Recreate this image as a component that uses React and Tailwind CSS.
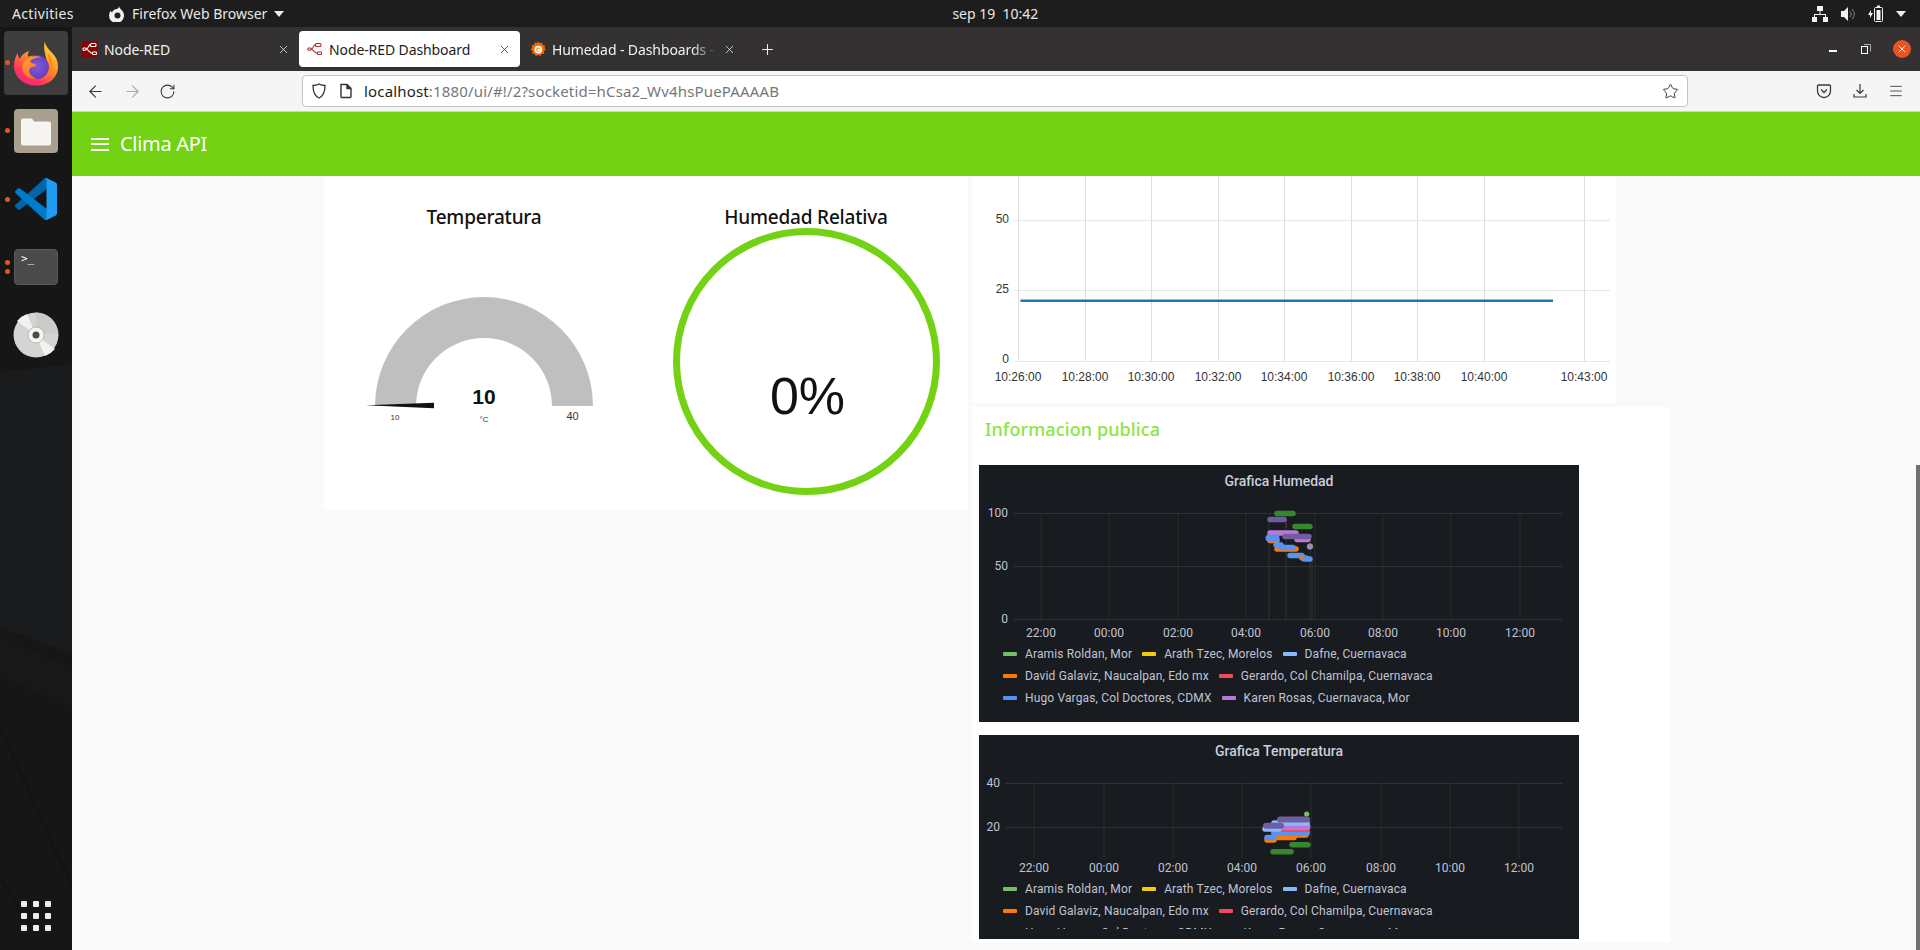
import React from "react";
import { ArrowLeft, ArrowRight, RotateCw, Star, X, Plus, Menu } from "lucide-react";

const ubuntu = "font-['Noto_Sans','Open_Sans',sans-serif]";

function NodeRedMark({ color = "#fff" }) {
  return (
    <svg viewBox="0 0 16 16" className="h-full w-full" fill="none" stroke={color} strokeWidth="1.1">
      <rect x="8.5" y="2.5" width="5.5" height="3" rx="1" />
      <rect x="1" y="7" width="3" height="2.2" rx="0.6" />
      <rect x="10.5" y="11" width="4" height="2.5" rx="0.8" />
      <path d="M4 8c3 0 2-4.500 4.500-4.500M4 8.300c3 0 3 3.900 6.500 3.900" />
    </svg>
  );
}

function GrafanaMark() {
  return (
    <svg viewBox="0 0 16 16" className="h-4 w-4">
      <path d="M8 0.500l1.700 1.800 2.300-.6.800 2.200 2.300.8-.6 2.300L15.800 8.700 14 10.300l.1 2.400-2.400.4-1.300 2-2.200-1-2.300.9-1.200-2.100-2.400-.4.200-2.400L.7 8.500l1.500-1.800-.4-2.400 2.300-.6.900-2.200 2.300.6z" fill="#f46800" />
      <circle cx="8.300" cy="8.600" r="3.900" fill="#fff" />
      <circle cx="8.300" cy="8.600" r="2.300" fill="#f9a03c" />
      <circle cx="8.800" cy="8.900" r="1.200" fill="#fff" />
    </svg>
  );
}

function FirefoxLogo() {
  return (
    <svg viewBox="0 0 48 48" className="h-[47px] w-[46px]">
      <defs>
        <linearGradient id="ffa" x1="0.8" y1="0" x2="0.2" y2="1">
          <stop offset="0" stopColor="#ffd93b" />
          <stop offset="0.4" stopColor="#ff9a25" />
          <stop offset="0.75" stopColor="#ff3b58" />
          <stop offset="1" stopColor="#f01d8c" />
        </linearGradient>
        <radialGradient id="ffb" cx="0.5" cy="0.45" r="0.55">
          <stop offset="0" stopColor="#7c5cdc" />
          <stop offset="1" stopColor="#6c3bb8" />
        </radialGradient>
        <linearGradient id="ffc" x1="0" y1="0" x2="1" y2="1">
          <stop offset="0" stopColor="#ffa92e" />
          <stop offset="1" stopColor="#ff5a2c" />
        </linearGradient>
      </defs>
      <path d="M33 1c1 5 4 8 8 12 4 4 6 9 6 14 0 12-10 20-23 20C11 47 1 38 1 26c0-5 2-10 4-13 0 3 1 5 2 6 2-4 6-7 10-8-2 3-2 5-1 6 2-1 5-1 7-1 6 0 10 4 12 7 1-4-4-11-2-22z" fill="url(#ffa)" />
      <circle cx="25" cy="28" r="12.500" fill="url(#ffb)" />
      <path d="M30 18c-4-2-9-2-13 0-5 2-8 7-7 13 2 6 8 10 15 9-5-2-8-5-8-9 0-3 3-3 6-4 1-1 1-2 0-3-3 0-5-1-5-3 3-2 8-4 12-3z" fill="url(#ffc)" />
      <path d="M36 13c4 4 6 9 5 15-1 7-7 12-13 13 6-3 10-8 10-14 0-5-1-9-2-14z" fill="#ff7f1f" opacity="0.7" />
    </svg>
  );
}

function VsCode() {
  return (
    <svg viewBox="0 0 100 100" className="h-[42px] w-[42px]">
      <path fill="#0065A9" d="M96.4614 10.7962L75.8569 0.875542C73.4719 -0.272773 70.6217 0.211611 68.75 2.08333L1.29858 63.5832C-0.515693 65.2373 -0.513607 68.0937 1.30308 69.7452L6.81272 74.754C8.29793 76.1042 10.5347 76.2036 12.1338 74.9905L93.3609 13.3699C96.086 11.3026 100 13.2462 100 16.6667V16.4275C100 14.0265 98.6246 11.8378 96.4614 10.7962Z" />
      <path fill="#007ACC" d="M96.4614 89.2038L75.8569 99.1245C73.4719 100.273 70.6217 99.7884 68.75 97.9167L1.29858 36.4169C-0.515693 34.7627 -0.513607 31.9063 1.30308 30.2548L6.81272 25.246C8.29793 23.8958 10.5347 23.7964 12.1338 25.0095L93.3609 86.6301C96.086 88.6974 100 86.7538 100 83.3334V83.5726C100 85.9735 98.6246 88.1622 96.4614 89.2038Z" />
      <path fill="#1F9CF0" d="M75.8578 99.1263C73.4721 100.274 70.6219 99.7885 68.75 97.9166C71.0564 100.223 75 98.5895 75 95.3278V4.67213C75 1.41039 71.0564 -0.223106 68.75 2.08329C70.6219 0.211402 73.4721 -0.273666 75.8578 0.873633L96.4587 10.7807C98.6234 11.8217 100 14.0112 100 16.4132V83.5871C100 85.9891 98.6234 88.1786 96.4586 89.2196L75.8578 99.1263Z" />
    </svg>
  );
}

function Dvd() {
  return (
    <svg viewBox="0 0 46 46" className="h-[46px] w-[46px]">
      <circle cx="23" cy="23" r="22.500" fill="#d4d4d4" />
      <path d="M23 23L4 9a23 23 0 0 1 10-7zM23 23l19 14a23 23 0 0 1-10 7z" fill="#f2f2f2" />
      <path d="M23 23L23 .5a22.500 22.500 0 0 1 22 20z" fill="#cbcbcb" />
      <circle cx="23" cy="23" r="8" fill="#f7f5f0" stroke="#b9ab95" strokeWidth="0.8" />
      <circle cx="23" cy="23" r="3.500" fill="#4b4b4b" />
    </svg>
  );
}

function Dock() {
  return (
    <aside className="relative flex w-[72px] shrink-0 flex-col items-center overflow-hidden bg-[#161616]">
      <svg className="absolute inset-0 h-full w-full" viewBox="0 0 72 923" preserveAspectRatio="none">
        <path d="M0 345l72-8v290L0 600z" fill="#1a1b1c" />
        <path d="M0 700L72 860M0 850l30 50" stroke="#131313" strokeWidth="3" fill="none" />
        <path d="M0 610l72 30v40L0 650z" fill="#181818" />
      </svg>
      <div className="relative mt-[4px] flex h-[64px] w-[64px] items-center justify-center rounded-[4px] bg-[#3d3d3d]">
        <FirefoxLogo />
      </div>
      <div className="relative mt-[14px] flex h-[44px] w-[44px] items-center justify-center rounded-[4px] bg-[#a89f8e]">
        <svg viewBox="0 0 32 28" className="h-[29px] w-[32px]">
          <path d="M1 3a2 2 0 0 1 2-2h9l2 3h15a2 2 0 0 1 2 2v20a2 2 0 0 1-2 2H3a2 2 0 0 1-2-2z" fill="#f6f5f2" />
        </svg>
      </div>
      <div className="relative mt-[25px]"><VsCode /></div>
      <div className="relative mt-[29px] h-[36px] w-[44px] rounded-[4px] border border-[#5a5a5a] bg-[#4a4a4a] pl-[6px] pt-[1px] font-['DejaVu_Sans_Mono',monospace] text-[11px] leading-[16px] text-white">
        &gt;_
      </div>
      <div className="relative mt-[27px]"><Dvd /></div>
      <div className="relative mt-auto mb-[19px] grid grid-cols-3 gap-x-[6px] gap-y-[6px]">
        {Array.from({ length: 9 }).map((_, i) => (
          <div key={i} className="h-[6px] w-[6px] rounded-[1px] bg-[#eeeeee]" />
        ))}
      </div>
      <div className="absolute left-[5px] top-[33px] h-[5px] w-[5px] rounded-full bg-[#e95420]" />
      <div className="absolute left-[5px] top-[101px] h-[5px] w-[5px] rounded-full bg-[#e95420]" />
      <div className="absolute left-[5px] top-[170px] h-[5px] w-[5px] rounded-full bg-[#e95420]" />
      <div className="absolute left-[5px] top-[233px] h-[5px] w-[5px] rounded-full bg-[#e95420]" />
      <div className="absolute left-[5px] top-[242px] h-[5px] w-[5px] rounded-full bg-[#e95420]" />
    </aside>
  );
}

function TopBar() {
  return (
    <header className={`flex h-[27px] shrink-0 items-center bg-[#1d1d1d] text-[14px] text-[#e8e8e8] ${ubuntu}`}>
      <span className="ml-[12px] w-[97px] tracking-[0.35px]">Activities</span>
      <svg viewBox="0 0 16 16" className="h-[16px] w-[16px]">
        <path d="M10 0c0 2 2 3 3.500 5A7.500 7.500 0 1 1 2 4.500c0 1 .5 1.500 1 2C4 4 6 3 8 3c1-.5 2-1.500 2-3z" fill="#f0f0f0" />
        <circle cx="8.500" cy="9.500" r="3" fill="#1d1d1d" />
      </svg>
      <span className="ml-[7px] tracking-[0px]">Firefox Web Browser</span>
      <svg viewBox="0 0 10 6" className="ml-[7px] h-[6px] w-[10px]"><path d="M0 0h10L5 6z" fill="#eee" /></svg>
      <span className="ml-[668px] whitespace-pre">sep 19  10:42</span>
      <div className="ml-auto mr-[14px] flex items-center gap-[12px]">
        <svg viewBox="0 0 16 16" className="h-[16px] w-[16px]" fill="#f2f2f2">
          <rect x="5" y="0" width="6" height="5" />
          <rect x="0" y="11" width="5" height="5" />
          <rect x="11" y="11" width="5" height="5" />
          <path d="M7.500 5h1v3H14v3h-1V9H3v2H2V8h5.500z" />
        </svg>
        <svg viewBox="0 0 16 16" className="h-[16px] w-[16px]">
          <path d="M1 5h3l4-4v14l-4-4H1z" fill="#f2f2f2" />
          <path d="M10 5c1.500 1.500 1.500 4.500 0 6M12 3c3 2.500 3 7.500 0 10" stroke="#888" fill="none" />
        </svg>
        <svg viewBox="0 0 16 18" className="h-[18px] w-[16px]">
          <path d="M3 5L0 10h2v3l3-5H3z" fill="#f2f2f2" />
          <rect x="6.500" y="2.500" width="8" height="14" rx="1" fill="none" stroke="#f2f2f2" />
          <rect x="8.500" y="5" width="4" height="10" fill="#f2f2f2" />
          <rect x="9" y="0.500" width="3" height="2" fill="#f2f2f2" />
        </svg>
        <svg viewBox="0 0 10 6" className="h-[6px] w-[10px]"><path d="M0 0h10L5 6z" fill="#eee" /></svg>
      </div>
    </header>
  );
}

function Tab({ active, icon, title, width, fade }) {
  return (
    <div className={`flex h-[36px] shrink-0 items-center rounded-[4px] pl-[8px] pr-[9px] text-[14px] ${active ? "bg-white text-[#222]" : "text-[#f0f0f0]"} ${ubuntu}`} style={{ width }}>
      <div className="h-[16px] w-[16px] shrink-0">{icon}</div>
      <span className={`ml-[6px] flex-1 overflow-hidden whitespace-nowrap tracking-[-0.1px] ${fade ? "[mask-image:linear-gradient(to_right,black_85%,transparent)]" : ""}`}>{title}</span>
      <X size={13} strokeWidth={1.4} className="ml-[6px] shrink-0" />
    </div>
  );
}

function TabBar() {
  return (
    <div className="flex h-[44px] shrink-0 items-center bg-[#333132] pl-[2px]">
      <Tab width={225} title="Node-RED" icon={<div className="h-full w-full rounded-[1px] bg-[#8f0000]"><NodeRedMark /></div>} />
      <Tab active width={221} title="Node-RED Dashboard" icon={<NodeRedMark color="#a83232" />} />
      <div className="ml-[2px]">
        <Tab width={223} fade title="Humedad - Dashboards - Grafana" icon={<GrafanaMark />} />
      </div>
      <Plus size={17} strokeWidth={1.5} className="ml-[14px] text-[#f0f0f0]" />
      <div className="ml-auto mr-[9px] flex items-center text-white">
        <div className="h-[1.5px] w-[8px] translate-y-[2px] bg-white" />
        <svg viewBox="0 0 10 10" className="ml-[24px] h-[10px] w-[10px]" fill="none" stroke="#fff"><rect x="0.500" y="2.500" width="6" height="7" /><path d="M3 0.500h6.500v7" stroke="#aaa" /></svg>
        <div className="ml-[22px] flex h-[18px] w-[18px] items-center justify-center rounded-full bg-[#e95420]"><X size={12} strokeWidth={1.8} /></div>
      </div>
    </div>
  );
}

function Toolbar() {
  return (
    <div className="flex h-[41px] shrink-0 items-center border-b border-[#cfcfcf] bg-[#f5f5f5] text-[#3a3a3a]">
      <ArrowLeft size={19} strokeWidth={1.4} className="ml-[14px]" />
      <ArrowRight size={19} strokeWidth={1.4} className="ml-[18px] text-[#aaa]" />
      <RotateCw size={17} strokeWidth={1.5} className="ml-[17px]" />
      <div className={`ml-[126px] flex h-[32px] w-[1386px] items-center rounded-[4px] border border-[#c4c4c4] bg-white pr-[8px] text-[15px] ${ubuntu}`}>
        <svg viewBox="0 0 16 16" className="ml-[8px] h-[16px] w-[16px]" fill="none" stroke="#333" strokeWidth="1.3"><path d="M8 1c2 1.200 4 1.500 6 1.500 0 6-1.500 10.500-6 12.500C3.500 13 2 8.500 2 2.500 4 2.500 6 2.200 8 1z" /></svg>
        <svg viewBox="0 0 14 16" className="ml-[12px] h-[16px] w-[14px]" fill="none" stroke="#333" strokeWidth="1.4"><path d="M2 1.500h6l4 4v8a1 1 0 0 1-1 1H3a1 1 0 0 1-1-1z" /><path d="M8 1.500v4h4" fill="#333" /></svg>
        <span className="ml-[11px] tracking-[0.16px] text-[#1c1c1c]">localhost<span className="text-[#777]">:1880/ui/#!/2?socketid=hCsa2_Wv4hsPuePAAAAB</span></span>
        <Star size={17} strokeWidth={1.4} className="ml-auto" />
      </div>
      <svg viewBox="0 0 16 16" className="ml-[128px] h-[16px] w-[16px]" fill="none" stroke="#3a3a3a" strokeWidth="1.3"><path d="M2.500 2h11a1 1 0 0 1 1 1v5a6.500 6.500 0 0 1-13 0V3a1 1 0 0 1 1-1z" /><path d="M5 6.500l3 3 3-3" /></svg>
      <svg viewBox="0 0 16 16" className="ml-[20px] h-[16px] w-[16px]" fill="none" stroke="#3a3a3a" strokeWidth="1.2"><path d="M8 1v9M4.500 7L8 10.500 11.500 7M2 11v3h12v-3" /></svg>
      <Menu size={16} strokeWidth={1.3} className="ml-[20px]" />
    </div>
  );
}

function Gauge() {
  return (
    <svg viewBox="0 0 280 190" className="h-[190px] w-[280px]">
      <path d="M31 136a109 109 0 0 1 218 0h-41a68 68 0 0 0-136 0z" fill="#bfbfbf" />
      <path d="M22 135.300L90 132.700V138.300z" fill="#111" />
      <g fontFamily="Liberation Sans, sans-serif" textAnchor="middle" fill="#111">
        <text x="140" y="134" fontSize="21" fontWeight="700">10</text>
        <text x="140" y="152" fontSize="8" fill="#333">°C</text>
        <text x="51" y="150" fontSize="8" fill="#333">10</text>
        <text x="228.500" y="149.500" fontSize="11" fill="#333">40</text>
      </g>
    </svg>
  );
}

function LeftPanel() {
  return (
    <section className={`flex h-[334px] w-[644px] shrink-0 bg-white ${ubuntu}`}>
      <div className="flex w-[320px] flex-col items-center">
        <h3 className="mt-[28px] text-[19px] leading-[26px] font-medium tracking-[-0.2px] text-[#111]">Temperatura</h3>
        <div className="mt-[40px]"><Gauge /></div>
      </div>
      <div className="flex w-[324px] flex-col items-center">
        <h3 className="mt-[28px] text-[19px] leading-[26px] font-medium tracking-[-0.2px] text-[#111]">Humedad Relativa</h3>
        <div className="relative ml-[1px] -mt-[2px] flex h-[267px] w-[267px] items-center justify-center rounded-full border-[7px] border-[#72d213] font-['Liberation_Sans',sans-serif] text-[52px] text-[#111]">
          <span className="translate-x-[1px] translate-y-[34px]">0%</span>
        </div>
      </div>
    </section>
  );
}

function LineChart() {
  const xs = [
    [46, "10:26:00"], [113, "10:28:00"], [179, "10:30:00"], [246, "10:32:00"], [312, "10:34:00"],
    [379, "10:36:00"], [445, "10:38:00"], [512, "10:40:00"], [612, "10:43:00"],
  ];
  return (
    <section className="h-[227px] w-[644px] bg-white">
      <svg viewBox="0 0 644 227" className="h-[227px] w-[644px]">
        {xs.map(([x]) => <line key={x} x1={x + 0.5} x2={x + 0.5} y1="0" y2="185" stroke="#dedede" />)}
        {[44, 114, 185].map((y) => <line key={y} x1="42" x2="638" y1={y + 0.5} y2={y + 0.5} stroke="#e6e6e6" />)}
        <line x1="48.500" x2="581" y1="124.700" y2="124.700" stroke="#1f77b4" strokeWidth="2.500" />
        <g fontFamily="Liberation Sans, sans-serif" fontSize="12" fill="#333">
          <text x="37" y="47" textAnchor="end">50</text>
          <text x="37" y="117" textAnchor="end">25</text>
          <text x="37" y="187" textAnchor="end">0</text>
          {xs.map(([x, t]) => <text key={x} x={x} y="205" textAnchor="middle">{t}</text>)}
        </g>
      </svg>
    </section>
  );
}

const LEGEND = [
  ["#73bf69", "Aramis Roldan, Mor"],
  ["#f2cc0c", "Arath Tzec, Morelos"],
  ["#8ab8ff", "Dafne, Cuernavaca"],
  ["#ff780a", "David Galaviz, Naucalpan, Edo mx"],
  ["#f2495c", "Gerardo, Col Chamilpa, Cuernavaca"],
  ["#5794f2", "Hugo Vargas, Col Doctores, CDMX"],
  ["#b877d9", "Karen Rosas, Cuernavaca, Mor"],
];

function Legend() {
  return (
    <div className="flex w-[500px] flex-wrap pl-[24px] font-['Roboto',sans-serif] text-[12px] leading-[22px] tracking-[0.14px] text-[#c0c4d4]">
      {LEGEND.map(([c, n]) => (
        <div key={n} className="mr-[10px] flex h-[22px] items-center whitespace-nowrap">
          <div className="mr-[8px] h-[4px] w-[14px] rounded-[1px]" style={{ background: c }} />
          {n}
        </div>
      ))}
    </div>
  );
}

function Seg({ d, c, w = 5.500, o = 1 }) {
  return <path d={d} stroke={c} strokeWidth={w} strokeLinecap="round" fill="none" opacity={o} />;
}

function GrafanaPanel({ title, height, legendHeight, gridH, gridV, labelY, legendTop, left, children, svgH }) {
  const times = ["22:00", "00:00", "02:00", "04:00", "06:00", "08:00", "10:00", "12:00"];
  return (
    <div className="w-[600px] overflow-hidden bg-[#181b1f]" style={{ height }}>
      <div className="flex h-[31px] items-center justify-center pt-[2px] font-['Roboto',sans-serif] text-[14px] font-medium text-[#ccccdc]">{title}</div>
      <svg viewBox={`0 0 600 ${svgH}`} className="block w-[600px]" style={{ height: svgH }}>
        {gridH.map(([y]) => <line key={y} x1={left} x2="583" y1={y} y2={y} stroke="#2f3136" />)}
        {gridV.map((x) => <line key={x} x1={x} x2={x} y1={gridH[0][0]} y2={gridH[gridH.length - 1][0]} stroke="#2a2c31" />)}
        {children}
        <g fontFamily="Roboto, sans-serif" fontSize="12" fill="#c0c4d4">
          {gridH.map(([y, t]) => <text key={t} x={left - 6} y={y + 3} textAnchor="end">{t}</text>)}
          {gridV.map((x, i) => <text key={x} x={x} y={labelY} textAnchor="middle">{times[i]}</text>)}
        </g>
      </svg>
      <div className="overflow-hidden" style={{ height: legendHeight, marginTop: legendTop }}><Legend /></div>
    </div>
  );
}

function Humidity() {
  const X = (x) => x - 979;
  const Y = (y) => y - 496;
  const s = (x1, x2, y) => `M${X(x1)} ${Y(y)}H${X(x2)}`;
  return (
    <GrafanaPanel
      title="Grafica Humedad" height={257} svgH={146} legendHeight={70} legendTop={1} labelY={141} left={35}
      gridH={[[17.5, "100"], [70.5, "50"], [123.5, "0"]]}
      gridV={[62, 130, 199, 267, 336, 404, 472, 541]}
    >
      <path d={`M${X(1269)} ${Y(519)}V${Y(620)}M${X(1286)} ${Y(519)}V${Y(620)}M${X(1310)} ${Y(546)}V${Y(620)}M${X(1312)} ${Y(559)}V${Y(620)}`} stroke="#3a3f3a" opacity="0.7" />
      <path d={`M${X(1286)} ${Y(519)}V${Y(528)}`} stroke="#7a2030" />
      <Seg d={s(1277, 1293, 513.5)} c="#37872d" />
      <Seg d={s(1270, 1284, 519.5)} c="#705da0" />
      <Seg d={s(1295, 1310, 526.5)} c="#37872d" />
      <Seg d={s(1270, 1296, 533)} c="#b877d9" />
      <Seg d={s(1270, 1277, 540.5)} c="#ff780a" />
      <Seg d={s(1269, 1276, 538)} c="#5794f2" w={7} />
      <Seg d={s(1297, 1308, 539.5)} c="#b877d9" />
      <Seg d={s(1285, 1309, 536.5)} c="#705da0" />
      <Seg d={s(1277, 1296, 549)} c="#ff780a" />
      <Seg d={s(1276, 1281, 545)} c="#5794f2" />
      <Seg d={s(1281, 1293, 547.500)} c="#5794f2" />
      <Seg d={s(1290, 1302, 555.5)} c="#5794f2" />
      <Seg d={s(1302, 1306, 558)} c="#ff780a" />
      <Seg d={s(1304, 1310, 559)} c="#5794f2" />
      <circle cx={X(1310)} cy={Y(546.5)} r="2.800" fill="#b877d9" stroke="#73bf69" strokeWidth="0.8" />
    </GrafanaPanel>
  );
}

function Temperature() {
  const X = (x) => x - 979;
  const Y = (y) => y - 766;
  const s = (x1, x2, y) => `M${X(x1)} ${Y(y)}H${X(x2)}`;
  return (
    <GrafanaPanel
      title="Grafica Temperatura" height={204} svgH={112} legendHeight={51} legendTop={0} labelY={106} left={27}
      gridH={[[17.5, "40"], [61.5, "20"]]}
      gridV={[55, 125, 194, 263, 332, 402, 471, 540]}
    >
      {[55, 125, 194, 263, 332, 402, 471, 540].map((x) => <line key={x} x1={x} x2={x} y1="61" y2="92" stroke="#2a2c31" />)}
      <Seg d={s(1267, 1274, 840)} c="#ff780a" />
      <Seg d={s(1274, 1294, 837.500)} c="#ff780a" />
      <Seg d={s(1294, 1306, 835)} c="#ff780a" />
      <Seg d={s(1267, 1274, 837.500)} c="#5794f2" />
      <Seg d={s(1274, 1307, 832.700)} c="#5794f2" w={6} />
      <Seg d={s(1283, 1307, 829.300)} c="#f2495c" />
      <Seg d={s(1281, 1307, 826.500)} c="#b877d9" w={7} />
      <Seg d={s(1274, 1307, 823)} c="#8ab8ff" />
      <Seg d={s(1280, 1307, 819.500)} c="#705da0" w={6} />
      <Seg d={s(1265, 1279, 829)} c="#8ab8ff" />
      <Seg d={s(1266, 1281, 825.700)} c="#705da0" w={6} />
      <Seg d={s(1292, 1308, 844.700)} c="#37872d" />
      <Seg d={s(1273, 1291, 851.700)} c="#37872d" />
      <circle cx={X(1306.700)} cy={Y(814)} r="2.600" fill="#73bf69" />
    </GrafanaPanel>
  );
}

function InfoPanel() {
  return (
    <section className="flex h-[535px] w-[698px] flex-col bg-white">
      <h2 className={`ml-[13px] mt-[10px] h-[48px] text-[18px] leading-[24px] font-medium tracking-[0.1px] text-[#8ee43f] ${ubuntu}`}>Informacion publica</h2>
      <div className="ml-[7px] flex flex-col gap-[13px]">
        <Humidity />
        <Temperature />
      </div>
    </section>
  );
}

export default function App() {
  return (
    <div className="relative flex h-[950px] w-[1920px] flex-col overflow-hidden bg-[#fafafa]">
      <TopBar />
      <div className="flex min-h-0 flex-1">
        <Dock />
        <main className="flex min-w-0 flex-1 flex-col">
          <TabBar />
          <Toolbar />
          <div className={`flex h-[64px] shrink-0 items-center bg-[#72d213] text-white ${ubuntu}`}>
            <div className="ml-[19px] flex w-[18px] flex-col gap-[3.500px]">
              <div className="h-[2px] bg-white" /><div className="h-[2px] bg-white" /><div className="h-[2px] bg-white" />
            </div>
            <span className="ml-[11px] text-[20px] tracking-[-0.3px]">Clima API</span>
          </div>
          <div className="relative flex min-h-0 flex-1 items-start gap-[4px] overflow-hidden pl-[252px]">
            <LeftPanel />
            <div className="flex flex-col gap-[4px]">
              <LineChart />
              <InfoPanel />
            </div>
            <div className="absolute right-0 top-[289px] bottom-0 w-[4px] bg-[#707070]" />
          </div>
        </main>
      </div>
    </div>
  );
}
